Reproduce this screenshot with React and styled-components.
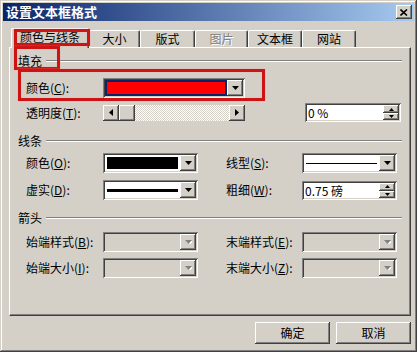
import React from 'react';
import styled, { createGlobalStyle, css } from 'styled-components';

const GlobalStyle = createGlobalStyle`
  html, body {
    margin: 0;
    padding: 0;
    background: #ffffff;
  }
  body {
    font-family: "Noto Sans CJK SC", "Liberation Sans", sans-serif;
    font-size: 12px;
    color: #000;
  }
`;

const raised = css`
  box-shadow: inset -1px -1px #404040, inset 1px 1px #ffffff, inset -2px -2px #808080, inset 2px 2px #d4d0c8;
`;

const sunken = css`
  box-shadow: inset 1px 1px #808080, inset -1px -1px #ffffff, inset 2px 2px #404040, inset -2px -2px #d4d0c8;
`;

const Window = styled.div`
  position: relative;
  width: 417px;
  height: 352px;
  box-sizing: border-box;
  padding: 3px;
  background: #d4d0c8;
  box-shadow: inset -1px -1px #404040, inset 1px 1px #d4d0c8, inset -2px -2px #808080, inset 2px 2px #ffffff;
  display: flex;
  flex-direction: column;
`;

const TitleBar = styled.div`
  height: 18px;
  display: flex;
  align-items: center;
  justify-content: space-between;
  padding: 0 2px 0 3px;
  background: linear-gradient(to right, #0a246a, #a6caf0);
`;

const Title = styled.span`
  color: #fff;
  font-weight: bold;
  font-size: 13px;
  line-height: 18px;
`;

const CloseBtn = styled.div`
  width: 16px;
  height: 14px;
  box-sizing: border-box;
  background: #d4d0c8;
  ${raised};
  display: flex;
  align-items: center;
  justify-content: center;
`;

const Body = styled.div`
  display: flex;
  flex-direction: column;
  padding: 0 3px 0 6px;
`;

const TabStrip = styled.div`
  display: flex;
  align-items: flex-end;
  height: 19px;
  margin-top: 7px;
  padding-left: 2px;
  position: relative;
  z-index: 1;
`;

const Tab = styled.div`
  box-sizing: border-box;
  width: ${p => p.$w}px;
  height: ${p => (p.$active ? 20 : 17)}px;
  margin-bottom: ${p => (p.$active ? -1 : 0)}px;
  background: #d4d0c8;
  border-top: 1px solid #fff;
  border-left: 1px solid #fff;
  border-right: 1px solid #404040;
  border-radius: 2px 2px 0 0;
  box-shadow: inset -1px 0 #808080;
  display: flex;
  align-items: center;
  justify-content: center;
  padding-bottom: ${p => (p.$active ? 3 : 0)}px;
  line-height: 14px;
  color: ${p => (p.$disabled ? '#808080' : '#000')};
  text-shadow: ${p => (p.$disabled ? '1px 1px #fff' : 'none')};
`;

const Panel = styled.div`
  height: 269px;
  box-sizing: border-box;
  border: 1px solid;
  border-color: #fff #404040 #404040 #fff;
  box-shadow: inset -1px -1px #808080;
  padding: 5px 8px 0 8px;
  display: flex;
  flex-direction: column;
`;

const SectionHead = styled.div`
  display: flex;
  align-items: center;
  gap: 4px;
  height: 15px;
  margin-top: ${p => p.$mt}px;
  line-height: 15px;
`;

const SectionLine = styled.div`
  flex: 1;
  border-top: 1px solid #808080;
  border-bottom: 1px solid #fff;
`;

const Row = styled.div`
  display: grid;
  grid-template-columns: ${p => (p.$wide ? '77px 142px 1fr 96px' : '77px 95px 28px 76px 95px')};
  align-items: center;
  height: ${p => p.$h || 20}px;
  margin-top: ${p => p.$mt}px;
  padding-left: 8px;
  padding-right: 1px;
`;

const Label = styled.span`
  line-height: 14px;
  white-space: nowrap;
  color: ${p => (p.$disabled ? '#000' : '#000')};
`;

const Combo = styled.div`
  display: flex;
  height: 20px;
  box-sizing: border-box;
  padding: 2px;
  background: ${p => (p.$disabled ? '#d4d0c8' : '#fff')};
  ${sunken};
`;

const ComboValue = styled.div`
  flex: 1;
  display: flex;
  align-items: stretch;
  padding: ${p => (p.$selected ? 2 : 2)}px;
  background: ${p => (p.$selected ? '#0a246a' : 'transparent')};
`;

const Swatch = styled.div`
  flex: 1;
  background: ${p => p.$color};
`;

const LineSample = styled.div`
  flex: 1;
  display: flex;
  align-items: center;
  &::before {
    content: '';
    flex: 1;
    height: ${p => p.$weight}px;
    background: #000;
  }
`;

const SmallBtn = styled.div`
  width: ${p => p.$w || 16}px;
  height: ${p => p.$h || 16}px;
  box-sizing: border-box;
  background: #d4d0c8;
  ${raised};
  display: flex;
  align-items: center;
  justify-content: center;
  flex-shrink: 0;
`;

const Slider = styled.div`
  display: flex;
  height: 16px;
`;

const Track = styled.div`
  flex: 1;
  background: repeating-conic-gradient(#ffffff 0 25%, #d4d0c8 0 50%) 0 0 / 2px 2px;
`;

const Spin = styled.div`
  display: flex;
  height: 19px;
  box-sizing: border-box;
  padding: 2px;
  background: #fff;
  ${sunken};
`;

const SpinText = styled.div`
  flex: 1;
  padding-left: 1px;
  line-height: 15px;
  font-size: 12px;
`;

const SpinBtns = styled.div`
  display: flex;
  flex-direction: column;
`;

const ButtonRow = styled.div`
  display: flex;
  justify-content: flex-end;
  gap: 6px;
  margin-top: 6px;
`;

const Button = styled.div`
  width: 75px;
  height: 22px;
  box-sizing: border-box;
  background: #d4d0c8;
  ${raised};
  display: flex;
  align-items: center;
  justify-content: center;
  line-height: 14px;
`;

const Mark = styled.div`
  position: absolute;
  left: ${p => p.$x}px;
  top: ${p => p.$y}px;
  width: ${p => p.$w}px;
  height: ${p => p.$h}px;
  box-sizing: border-box;
  border: 3px solid #cc1414;
  box-shadow: 0 0 1px #f09090, inset 0 0 1px #f09090;
  pointer-events: none;
  z-index: 5;
`;

const Arrow = ({ dir = 'down', color = '#000' }) => {
  const pts = {
    down: '0,0 7,0 3.5,4',
    up: '0,4 7,4 3.5,0',
    left: '4,0 4,7 0,3.5',
    right: '0,0 0,7 4,3.5',
  }[dir];
  const horiz = dir === 'left' || dir === 'right';
  return (
    <svg width={horiz ? 4 : 7} height={horiz ? 7 : 4} viewBox={horiz ? '0 0 4 7' : '0 0 7 4'}>
      {color !== '#000' && <polygon points={pts} fill="#fff" transform="translate(1,1)" />}
      <polygon points={pts} fill={color} />
    </svg>
  );
};

const SmallArrow = ({ dir }) => (
  <svg width="5" height="3" viewBox="0 0 5 3">
    <polygon points={dir === 'up' ? '0,3 5,3 2.5,0' : '0,0 5,0 2.5,3'} fill="#000" />
  </svg>
);

const DropCombo = ({ disabled, children }) => (
  <Combo $disabled={disabled}>
    {children || <ComboValue />}
    <SmallBtn>
      <Arrow dir="down" color={disabled ? '#808080' : '#000'} />
    </SmallBtn>
  </Combo>
);

const SpinBox = ({ value }) => (
  <Spin>
    <SpinText>{value}</SpinText>
    <SpinBtns>
      <SmallBtn $w={16} $h={8}><SmallArrow dir="up" /></SmallBtn>
      <SmallBtn $w={16} $h={7}><SmallArrow dir="down" /></SmallBtn>
    </SpinBtns>
  </Spin>
);

const tabs = [
  { name: '颜色与线条', w: 78, active: true },
  { name: '大小', w: 51 },
  { name: '版式', w: 55 },
  { name: '图片', w: 53, disabled: true },
  { name: '文本框', w: 54 },
  { name: '网站', w: 54 },
];

function App() {
  return (
    <>
      <GlobalStyle />
      <Window>
        <TitleBar>
          <Title>设置文本框格式</Title>
          <CloseBtn>
            <svg width="8" height="7" viewBox="0 0 8 7">
              <path d="M0.5 0.5 L7 6.5 M7 0.5 L0.5 6.5" stroke="#000" strokeWidth="1.6" />
            </svg>
          </CloseBtn>
        </TitleBar>

        <Body>
          <TabStrip>
            {tabs.map(t => (
              <Tab key={t.name} $w={t.w} $active={t.active} $disabled={t.disabled}>
                {t.name}
              </Tab>
            ))}
          </TabStrip>

          <Panel>
            <SectionHead $mt={0}>
              <span>填充</span>
              <SectionLine />
            </SectionHead>
            <Row $wide $mt={10}>
              <Label>颜色(<u>C</u>):</Label>
              <DropCombo>
                <ComboValue $selected>
                  <Swatch $color="#ff0000" />
                </ComboValue>
              </DropCombo>
            </Row>
            <Row $wide $mt={5} $h={18}>
              <Label>透明度(<u>T</u>):</Label>
              <Slider>
                <SmallBtn><Arrow dir="left" /></SmallBtn>
                <SmallBtn />
                <Track />
                <SmallBtn><Arrow dir="right" /></SmallBtn>
              </Slider>
              <span />
              <SpinBox value="0 %" />
            </Row>

            <SectionHead $mt={12}>
              <span>线条</span>
              <SectionLine />
            </SectionHead>
            <Row $mt={5}>
              <Label>颜色(<u>O</u>):</Label>
              <DropCombo>
                <ComboValue>
                  <Swatch $color="#000" />
                </ComboValue>
              </DropCombo>
              <span />
              <Label>线型(<u>S</u>):</Label>
              <DropCombo>
                <ComboValue>
                  <LineSample $weight={1} />
                </ComboValue>
              </DropCombo>
            </Row>
            <Row $mt={7}>
              <Label>虚实(<u>D</u>):</Label>
              <DropCombo>
                <ComboValue>
                  <LineSample $weight={3} />
                </ComboValue>
              </DropCombo>
              <span />
              <Label>粗细(<u>W</u>):</Label>
              <SpinBox value="0.75 磅" />
            </Row>

            <SectionHead $mt={10}>
              <span>箭头</span>
              <SectionLine />
            </SectionHead>
            <Row $mt={7}>
              <Label>始端样式(<u>B</u>):</Label>
              <DropCombo disabled />
              <span />
              <Label>末端样式(<u>E</u>):</Label>
              <DropCombo disabled />
            </Row>
            <Row $mt={6}>
              <Label>始端大小(<u>I</u>):</Label>
              <DropCombo disabled />
              <span />
              <Label>末端大小(<u>Z</u>):</Label>
              <DropCombo disabled />
            </Row>
          </Panel>

          <ButtonRow>
            <Button>确定</Button>
            <Button>取消</Button>
          </ButtonRow>
        </Body>

        <Mark $x={14} $y={29} $w={76} $h={17} />
        <Mark $x={14} $y={46} $w={46} $h={24} />
        <Mark $x={18} $y={69} $w={247} $h={32} />
      </Window>
    </>
  );
}

export default App;
